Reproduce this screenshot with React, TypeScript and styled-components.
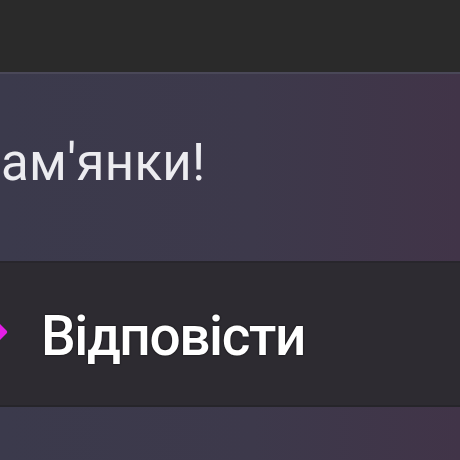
import React from "react";
import styled, { createGlobalStyle } from "styled-components";

const Global = createGlobalStyle`
  html, body { margin: 0; padding: 0; background: #2a2a2a; }
  body { width: 460px; height: 460px; overflow: hidden; font-family: Roboto, "Noto Sans", sans-serif; }
`;

const Screen = styled.div`
  width: 460px;
  height: 460px;
  display: flex;
  flex-direction: column;
  background: #2a2a2a;
  overflow: hidden;
`;

const TopBar = styled.div`
  height: 72px;
  flex: none;
  background: #2a2a2a;
  border-bottom: 2px solid #4a4858;
`;

const Bubble = styled.div`
  height: 187px;
  flex: none;
  background: linear-gradient(90deg, #3b3a4c 0%, #3d394b 55%, #413448 100%);
  display: flex;
  align-items: flex-start;
  border-bottom: 2px solid #28262c;
`;

const MessageText = styled.div`
  margin-top: 59px;
  margin-left: 1px;
  font-size: 51px;
  line-height: 60px;
  font-weight: 400;
  color: #ececf0;
  white-space: nowrap;
  letter-spacing: 0.3px;
`;

const ReplyRow = styled.div`
  height: 142px;
  flex: none;
  background: #2d2b31;
  display: flex;
  align-items: center;
  position: relative;
  border-bottom: 2px solid #26252a;
`;

const Diamond = styled.div`
  position: absolute;
  left: -9px;
  top: 62px;
  width: 14px;
  height: 14px;
  background: #e41ee6;
  transform: rotate(45deg);
  border-radius: 2px;
`;

const ReplyLabel = styled.div`
  margin-left: 41px;
  margin-top: 4px;
  font-size: 55px;
  font-weight: 500;
  color: #ffffff;
  white-space: nowrap;
  letter-spacing: -1.4px;
  text-shadow: 0 0 2px #000;
`;

const Below = styled.div`
  flex: 1;
  background: linear-gradient(90deg, #3b3a4c 0%, #3d394b 55%, #413448 100%);
`;

export default function App() {
  return (
    <>
      <Global />
      <Screen>
        <TopBar />
        <Bubble>
          <MessageText>ам′янки!</MessageText>
        </Bubble>
        <ReplyRow>
          <Diamond />
          <ReplyLabel>Відповісти</ReplyLabel>
        </ReplyRow>
        <Below />
      </Screen>
    </>
  );
}
